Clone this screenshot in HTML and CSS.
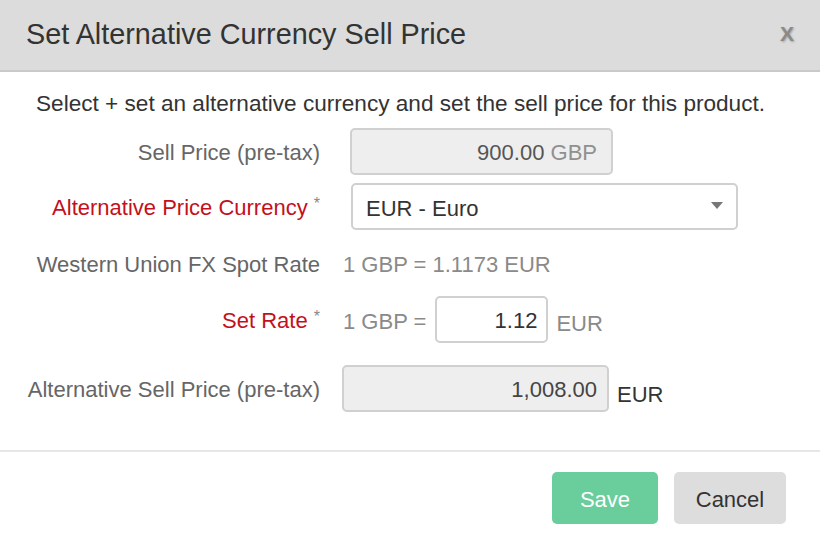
FILE: index.html
```html
<!DOCTYPE html>
<html>
<head>
<meta charset="utf-8">
<link rel="stylesheet" href="styles.css">
</head>
<body>
<div class="modal">
  <div class="modal-header">
    <h1 class="modal-title">Set Alternative Currency Sell Price</h1>
    <span class="close">X</span>
  </div>
  <div class="modal-body">
    <p class="desc">Select + set an alternative currency and set the sell price for this product.</p>
    <div class="form">
      <div class="row r1">
        <div class="label">Sell Price (pre-tax)</div>
        <div class="field">
          <div class="input readonly w-sell"><span class="num">900.00</span>&nbsp;<span class="unit">GBP</span></div>
        </div>
      </div>
      <div class="row r2">
        <div class="label required">Alternative Price Currency <span class="star">*</span></div>
        <div class="field">
          <div class="select">
            <span class="sel-text">EUR - Euro</span>
            <svg class="caret" width="12" height="8" viewBox="0 0 12 8"><path d="M0 0 L12 0 L6 7 Z" fill="#777"/></svg>
          </div>
        </div>
      </div>
      <div class="row r3">
        <div class="label">Western Union FX Spot Rate</div>
        <div class="field text-muted">1 GBP = 1.1173 EUR</div>
      </div>
      <div class="row r4">
        <div class="label required">Set Rate <span class="star">*</span></div>
        <div class="field">
          <span class="text-muted">1 GBP =</span>
          <div class="input rate">1.12</div>
          <span class="text-muted eur">EUR</span>
        </div>
      </div>
      <div class="row r5">
        <div class="label">Alternative Sell Price (pre-tax)</div>
        <div class="field">
          <div class="input readonly alt">1,008.00</div>
          <span class="eur dark">EUR</span>
        </div>
      </div>
    </div>
  </div>
  <div class="modal-footer">
    <button class="btn btn-save">Save</button>
    <button class="btn btn-cancel">Cancel</button>
  </div>
</div>
</body>
</html>
```
FILE: styles.css
```css
* { box-sizing: border-box; }
html, body { margin: 0; padding: 0; background: #fff; }
body {
  font-family: "Liberation Sans", Arial, sans-serif;
  width: 820px;
  height: 538px;
  overflow: hidden;
}
.modal { width: 820px; height: 538px; display: flex; flex-direction: column; }
.modal-header {
  height: 72px;
  background: #dcdcdc;
  border-bottom: 2px solid #c9c9c9;
  display: flex;
  align-items: center;
  justify-content: space-between;
  padding: 0 26px 0 26px;
}
.modal-title {
  margin: 0;
  font-weight: normal;
  font-size: 28.8px;
  color: #333;
  padding-bottom: 2px;
}
.close {
  font-size: 21px;
  color: #8a8a8a;
  font-weight: bold;
  text-shadow: 1px 1px 2px rgba(0,0,0,0.25);
  padding-bottom: 2px;
}
.modal-body { padding: 0; height: 380px; border-bottom: 2px solid #e6e6e6; }
.desc {
  margin: 18px 0 0 36px;
  font-size: 22.6px;
  line-height: 28px;
  color: #333;
}
.form { margin-top: 10px; display: flex; flex-direction: column; }
.row { display: flex; align-items: center; height: 47px; }
.r2 { margin-top: 8px; }
.r3 { margin-top: 10px; }
.r4 { margin-top: 9px; }
.r5 { margin-top: 22px; }
.label {
  width: 320px;
  text-align: right;
  font-size: 22px;
  color: #666;
  flex: none;
  padding-top: 3px;
}
.label.required { color: #c4101c; }
.star { color: #888; font-size: 16px; vertical-align: 6px; }
.field {
  display: flex;
  align-items: center;
  margin-left: 23px;
  font-size: 22px;
}
.r3 .field { padding-top: 3px; }
.text-muted { color: #8a8a8a; }
.r4 .field > .text-muted:first-child { padding-top: 4px; }
.input {
  height: 47px;
  border: 2px solid #d0d0d0;
  border-radius: 5px;
  display: flex;
  align-items: center;
  justify-content: flex-end;
  font-size: 22px;
  color: #444;
  padding-top: 3px;
}
.readonly { background: #eeeeee; }
.w-sell { width: 263px; margin-left: 7px; padding-right: 14px; }
.num { color: #555; }
.unit { color: #909090; }
.select {
  width: 387px;
  height: 47px;
  margin-left: 8px;
  border: 2px solid #d0d0d0;
  border-radius: 5px;
  background: #fff;
  display: flex;
  align-items: center;
  justify-content: space-between;
  padding: 0 13px 0 14px;
  font-size: 22px;
  color: #333;
}
.sel-text { padding-top: 4px; margin-left: -1px; }
.caret { margin-top: -2px; }
.rate {
  width: 113px;
  background: #fff;
  margin-left: 9px;
  padding-right: 9px;
  color: #333;
}
.eur { margin-left: 8px; padding-top: 8px; }
.alt { width: 267px; margin-left: -1px; padding-right: 10px; color: #444; }
.dark { color: #333; padding-top: 13px; }
.modal-footer {
  flex: 1;
  display: flex;
  justify-content: flex-end;
  align-items: flex-start;
  padding: 20px 34px 0 0;
  gap: 16px;
}
.btn {
  font-family: "Liberation Sans", Arial, sans-serif;
  height: 52px;
  border: none;
  border-radius: 5px;
  font-size: 22px;
  padding: 4px 0 0 0;
}
.btn-save { width: 106px; background: #6acd9c; color: #fff; }
.btn-cancel { width: 112px; background: #dddddd; color: #333; }
```
